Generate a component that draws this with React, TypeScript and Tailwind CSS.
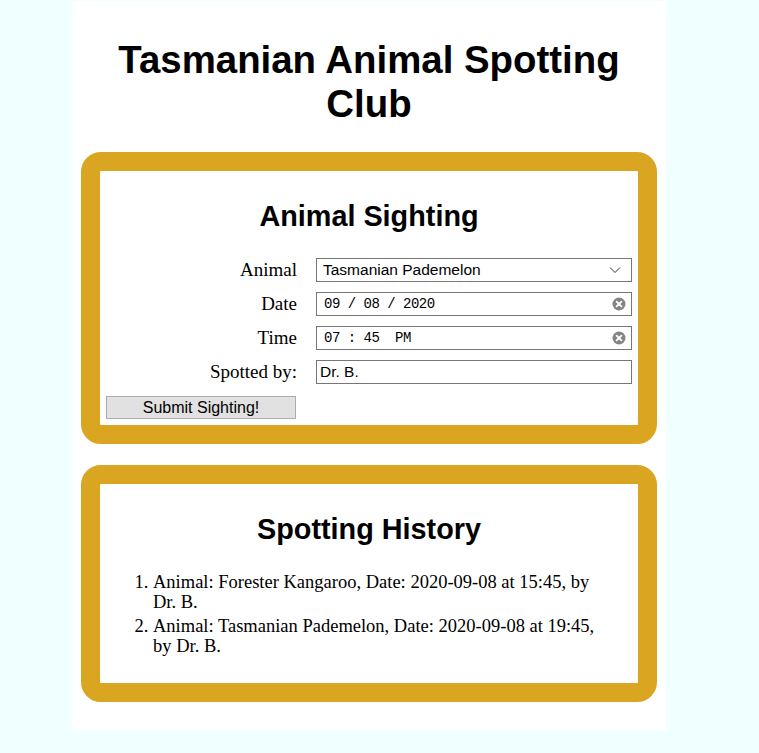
import React from "react";

const sans = "font-['Liberation_Sans',Arial,sans-serif]";
const serif = "font-['Liberation_Serif','Times_New_Roman',serif]";
const mono = "font-['Liberation_Mono','Courier_New',monospace]";

const sightings = [
  "Animal: Forester Kangaroo, Date: 2020-09-08 at 15:45, by Dr. B.",
  "Animal: Tasmanian Pademelon, Date: 2020-09-08 at 19:45, by Dr. B.",
];

// little grey round "x" that Chrome draws in date/time fields
const ClearIcon = () => (
  <svg width="14" height="14" viewBox="0 0 14 14" aria-hidden="true">
    <circle cx="7" cy="7" r="6.5" fill="#858585" />
    <path d="M4.6 4.6 L9.4 9.4 M9.4 4.6 L4.6 9.4" stroke="#fff" strokeWidth="1.8" strokeLinecap="round" />
  </svg>
);

const Chevron = () => (
  <svg width="12" height="8" viewBox="0 0 12 8" aria-hidden="true">
    <path d="M1 1.5 L6 6.5 L11 1.5" fill="none" stroke="#333" strokeWidth="1" />
  </svg>
);

const Label = ({ children }: { children: React.ReactNode }) => (
  <div className={`${serif} text-[19px] leading-[24px] text-right text-black`}>{children}</div>
);

const Field = ({ children, className = "" }: { children: React.ReactNode; className?: string }) => (
  <div className={`h-[24px] border border-[#767676] bg-white flex items-center ${className}`}>{children}</div>
);

const Card = ({ title, children }: { title: string; children: React.ReactNode }) => (
  <section className="border-[19px] border-[#daa520] rounded-[20px] bg-white p-[6px]">
    <h2 className={`${sans} font-bold text-[28.8px] leading-[33px] text-center text-black mt-[23px] mb-[25px]`}>
      {title}
    </h2>
    {children}
  </section>
);

export default function App() {
  return (
    <div className="min-h-[753px] bg-[#f0ffff] pt-[1px]">
      <div className="ml-[72px] w-[594px] bg-white px-[9px] pt-[37px] pb-[28px]">
        <h1 className={`${sans} font-bold text-[38.4px] leading-[44px] text-center text-black mb-[26px]`}>
          Tasmanian Animal Spotting Club
        </h1>

        <Card title="Animal Sighting">
          <div className="grid grid-cols-[191px_316px] gap-x-[19px] gap-y-[10px] items-center">
            <Label>Animal</Label>
            <Field className="pl-[6px] pr-[10px] justify-between">
              <span className={`${sans} text-[15.5px] text-black`}>Tasmanian Pademelon</span>
              <Chevron />
            </Field>

            <Label>Date</Label>
            <Field className="pl-[7px] pr-[5px] justify-between">
              <span className={`${mono} text-[14px] tracking-[-0.5px] text-black whitespace-pre`}>09 / 08 / 2020</span>
              <ClearIcon />
            </Field>

            <Label>Time</Label>
            <Field className="pl-[7px] pr-[5px] justify-between">
              <span className={`${mono} text-[14px] tracking-[-0.5px] text-black whitespace-pre`}>07 : 45  PM</span>
              <ClearIcon />
            </Field>

            <Label>Spotted by:</Label>
            <Field className="pl-[3px]">
              <span className={`${sans} text-[15.5px] text-black`}>Dr. B.</span>
            </Field>
          </div>

          <button
            type="button"
            className={`${sans} mt-[12px] w-[190px] h-[23px] bg-[#e1e1e1] border border-[#adadad] text-[16px] leading-none text-black block`}
          >
            Submit Sighting!
          </button>
        </Card>

        <div className="mt-[21px]">
          <Card title="Spotting History">
            <ol className={`${serif} list-decimal pl-[47px] pr-[17px] pt-[1px] mb-[21px] text-[18.5px] leading-[20px] text-black`}>
              {sightings.map((s) => (
                <li key={s} className="mb-[4px] last:mb-0">
                  {s}
                </li>
              ))}
            </ol>
          </Card>
        </div>
      </div>
    </div>
  );
}
